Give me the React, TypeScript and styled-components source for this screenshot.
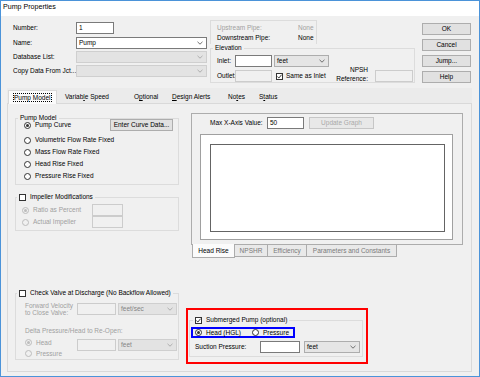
import styled, { createGlobalStyle } from 'styled-components';

const GlobalStyle = createGlobalStyle`
  html, body { margin: 0; padding: 0; background: #ffffff; }
  body {
    font-family: 'Liberation Sans', Arial, sans-serif;
    font-size: 6.5px;
    line-height: 8px;
    color: #000000;
  }
  *, *::before, *::after { box-sizing: border-box; }
`;

const GREY = '#a0a0a0';

const Window = styled.div`
  width: 480px;
  height: 377px;
  border: 1px solid #4b93d9;
  background: #f0f0f0;
  display: flex;
  flex-direction: column;
  overflow: hidden;
`;

const TitleBar = styled.div`
  height: 15px;
  flex-shrink: 0;
  background: #ffffff;
  padding: 2px 0 0 2px;
  font-size: 7.1px;
  line-height: 9px;
`;

const TopArea = styled.div`
  height: 72px;
  flex-shrink: 0;
  display: flex;
  padding: 4px 0 0 12px;
`;

const FieldList = styled.div`
  width: 194px;
  display: flex;
  flex-direction: column;
  gap: 2px;
  padding-top: 2px;
`;

const FieldRow = styled.div`
  display: flex;
  align-items: center;
  height: 12px;
  &:first-child {
    margin-bottom: 1px;
  }
`;

const FieldLabel = styled.span`
  width: 63px;
  flex-shrink: 0;
  white-space: nowrap;
`;

const Text = styled.span<{ $off?: boolean; $ml?: number }>`
  color: ${(p) => (p.$off ? GREY : '#000')};
  margin-left: ${(p) => p.$ml ?? 0}px;
  white-space: nowrap;
`;

const TextBox = styled.div<{ $w: number; $off?: boolean; $ml?: number; $end?: boolean }>`
  width: ${(p) => p.$w}px;
  height: 12px;
  flex-shrink: 0;
  margin-left: ${(p) => p.$ml ?? 0}px;
  align-self: ${(p) => (p.$end ? 'flex-end' : 'auto')};
  border: 1px solid ${(p) => (p.$off ? '#cccccc' : '#7a7a7a')};
  background: ${(p) => (p.$off ? '#f0f0f0' : '#ffffff')};
  padding-left: 2px;
  display: flex;
  align-items: center;
`;

type ComboKind = 'edit' | 'list' | 'off';

const ComboBox = styled.div<{ $w: number; $kind: ComboKind; $ml?: number }>`
  width: ${(p) => p.$w}px;
  height: 12px;
  flex-shrink: 0;
  margin-left: ${(p) => p.$ml ?? 0}px;
  display: flex;
  align-items: center;
  justify-content: space-between;
  padding: 0 3px 0 2px;
  border: 1px solid ${(p) => (p.$kind === 'edit' ? '#7a7a7a' : p.$kind === 'list' ? '#adadad' : '#cfcfcf')};
  background: ${(p) => (p.$kind === 'edit' ? '#ffffff' : p.$kind === 'list' ? '#e5e5e5' : '#e3e3e3')};
  color: ${(p) => (p.$kind === 'off' ? '#838383' : '#000')};
`;

const Chevron = ({ color }: { color: string }) => (
  <svg width="6" height="4" viewBox="0 0 6 4">
    <polyline points="0.5,0.8 3,3.2 5.5,0.8" fill="none" stroke={color} strokeWidth="0.9" />
  </svg>
);

const Combo = ({ w, kind, value, ml }: { w: number; kind: ComboKind; value?: string; ml?: number }) => (
  <ComboBox $w={w} $kind={kind} $ml={ml}>
    <span>{value}</span>
    <Chevron color={kind === 'off' ? '#a8a8a8' : '#606060'} />
  </ComboBox>
);

const Button = styled.div<{ $w: number; $off?: boolean; $ml?: number; $auto?: boolean }>`
  width: ${(p) => p.$w}px;
  height: 12px;
  flex-shrink: 0;
  margin-left: ${(p) => (p.$auto ? 'auto' : `${p.$ml ?? 0}px`)};
  border: 1px solid ${(p) => (p.$off ? '#c6c6c6' : '#adadad')};
  background: ${(p) => (p.$off ? '#e8e8e8' : '#e1e1e1')};
  color: ${(p) => (p.$off ? '#a8a8a8' : '#000')};
  display: flex;
  align-items: center;
  justify-content: center;
  white-space: nowrap;
`;

const CheckBoxBox = styled.span<{ $ml?: number }>`
  width: 7px;
  height: 7px;
  flex-shrink: 0;
  margin-left: ${(p) => p.$ml ?? 0}px;
  border: 1px solid #333333;
  background: #ffffff;
  display: flex;
  align-items: center;
  justify-content: center;
`;

const CheckBox = ({ checked, ml }: { checked?: boolean; ml?: number }) => (
  <CheckBoxBox $ml={ml}>
    {checked && (
      <svg width="5" height="5" viewBox="0 0 5 5">
        <polyline points="0.4,2.6 1.9,4 4.6,0.7" fill="none" stroke="#222" strokeWidth="0.9" />
      </svg>
    )}
  </CheckBoxBox>
);

const RadioRing = styled.span<{ $off?: boolean }>`
  width: 7px;
  height: 7px;
  flex-shrink: 0;
  border-radius: 50%;
  border: 1px solid ${(p) => (p.$off ? '#bcbcbc' : '#333333')};
  background: ${(p) => (p.$off ? '#f0f0f0' : '#ffffff')};
  display: flex;
  align-items: center;
  justify-content: center;
`;

const RadioDot = styled.span<{ $off?: boolean }>`
  width: 3px;
  height: 3px;
  border-radius: 50%;
  background: ${(p) => (p.$off ? '#bcbcbc' : '#333333')};
`;

const Radio = ({ checked, off }: { checked?: boolean; off?: boolean }) => (
  <RadioRing $off={off}>{checked && <RadioDot $off={off} />}</RadioRing>
);

const Middle = styled.div`
  width: 205px;
  margin-left: 3px;
  display: flex;
  flex-direction: column;
`;

const PipeBox = styled.div`
  width: 107px;
  height: 24px;
  border: 1px solid #dcdcdc;
  border-bottom: none;
  padding: 2px 0 0 6px;
`;

const PipeRow = styled.div<{ $off?: boolean }>`
  height: 10px;
  display: flex;
  align-items: center;
  color: ${(p) => (p.$off ? GREY : '#000')};
`;

const PipeLabel = styled.span`
  width: 81px;
`;

const Group = styled.fieldset<{ $w: number; $mt?: number; $ml?: number }>`
  width: ${(p) => p.$w}px;
  margin: ${(p) => p.$mt ?? 0}px 0 0 ${(p) => p.$ml ?? 0}px;
  padding: 0;
  border: 1px solid #dcdcdc;
  min-width: 0;
`;

const Legend = styled.legend<{ $ml: number }>`
  margin-left: ${(p) => p.$ml}px;
  padding: 0 2px;
  height: 8px;
  line-height: 8px;
  display: flex;
  align-items: center;
  gap: 4px;
  white-space: nowrap;
`;

const GroupBody = styled.div<{ $pad: string }>`
  padding: ${(p) => p.$pad};
  display: flex;
  flex-direction: column;
`;

const ElevBody = styled.div`
  display: flex;
  padding: 3px 0 0 6px;
`;

const ElevRows = styled.div`
  display: flex;
  flex-direction: column;
  gap: 3px;
`;

const Row = styled.div<{ $h?: number; $mt?: number }>`
  display: flex;
  align-items: center;
  height: ${(p) => p.$h ?? 12}px;
  margin-top: ${(p) => p.$mt ?? 0}px;
  white-space: nowrap;
`;

const ElevLabel = styled.span`
  width: 18px;
  flex-shrink: 0;
`;

const NpshLabel = styled.div`
  align-self: flex-end;
  width: 38px;
  margin: 0 0 -1px 1px;
  text-align: right;
  line-height: 9px;
`;

const ButtonCol = styled.div`
  margin-left: 7px;
  padding-top: 3px;
  display: flex;
  flex-direction: column;
  gap: 4px;
`;

const TabArea = styled.div`
  padding-left: 6px;
  display: flex;
  flex-direction: column;
`;

const TabStrip = styled.div`
  width: 465px;
  height: 15px;
  display: flex;
  align-items: flex-end;
  background: #ebebeb;
`;

const Tab = styled.div<{ $w: number; $pl: number; $active?: boolean }>`
  width: ${(p) => p.$w}px;
  padding-left: ${(p) => p.$pl}px;
  height: ${(p) => (p.$active ? 14 : 12)}px;
  margin: 0 0 ${(p) => (p.$active ? -1 : 0)}px ${(p) => (p.$active ? 1 : 0)}px;
  display: flex;
  align-items: center;
  white-space: nowrap;
  position: relative;
  z-index: ${(p) => (p.$active ? 1 : 0)};
  background: ${(p) => (p.$active ? '#fbfbfb' : 'transparent')};
  border: ${(p) => (p.$active ? '1px solid #d9d9d9' : 'none')};
  border-bottom: none;
`;

const FocusRect = styled.span`
  display: inline-block;
  border: 1px dotted #000;
  line-height: 7px;
  padding: 0;
`;

const Panel = styled.div`
  width: 465px;
  height: 269px;
  border: 1px solid #d9d9d9;
  background: #f0f0f0;
  display: flex;
  padding: 9px 0 0 7px;
`;

const LeftCol = styled.div`
  width: 164px;
  flex-shrink: 0;
  display: flex;
  flex-direction: column;
  padding-top: 1px;
`;

const RadioItem = styled.div<{ $w?: number }>`
  display: flex;
  align-items: center;
  gap: 4px;
  width: ${(p) => (p.$w ? `${p.$w}px` : 'auto')};
  flex-shrink: 0;
`;

const TwoLine = styled.div`
  width: 52px;
  flex-shrink: 0;
  line-height: 7px;
  color: ${GREY};
`;

const RadioCol = styled.div`
  width: 52px;
  display: flex;
  flex-direction: column;
  color: ${GREY};
`;

const ControlPair = styled.div<{ $mt?: number }>`
  display: flex;
  align-self: flex-start;
  margin-top: ${(p) => p.$mt ?? 0}px;
`;

const RightCol = styled.div`
  margin-left: 7px;
  display: flex;
  flex-direction: column;
`;

const GraphFrame = styled.div`
  width: 272px;
  height: 132px;
  margin-left: 5px;
  border: 1px solid #acacac;
  padding: 3px 0 0 18px;
  display: flex;
  flex-direction: column;
`;

const AxisLabel = styled.span`
  width: 52px;
  text-align: right;
  white-space: nowrap;
`;

const GraphOuter = styled.div`
  width: 253px;
  height: 106px;
  margin: 5px 0 0 -10px;
  border: 1px solid #a0a0a0;
  background: #ffffff;
  padding: 9px 0 0 9px;
`;

const GraphInner = styled.div`
  width: 235px;
  height: 88px;
  border: 1px solid #646464;
`;

const BottomTabs = styled.div`
  display: flex;
  align-items: flex-start;
  margin-left: 6px;
  height: 14px;
`;

const BottomTab = styled.div<{ $w: number; $active?: boolean }>`
  width: ${(p) => p.$w}px;
  height: ${(p) => (p.$active ? 14 : 12)}px;
  margin-top: ${(p) => (p.$active ? -1 : 0)}px;
  margin-left: -1px;
  &:first-child {
    margin-left: 0;
  }
  border: 1px solid #acacac;
  border-top: none;
  background: ${(p) => (p.$active ? '#fbfbfb' : '#e9e9e9')};
  color: ${(p) => (p.$active ? '#000' : '#7a7a7a')};
  display: flex;
  align-items: center;
  justify-content: center;
  white-space: nowrap;
  position: relative;
  z-index: ${(p) => (p.$active ? 1 : 0)};
`;

const RedBox = styled.div`
  width: 182px;
  height: 56px;
  margin-top: 49px;
  border: 2px solid #ff0000;
`;

const BlueBox = styled.div`
  width: 104px;
  height: 11px;
  margin-left: 1px;
  border: 2px solid #0000ff;
  padding-left: 2px;
  display: flex;
  align-items: center;
  line-height: 7px;
`;

const SuctionLabel = styled.span`
  width: 65px;
  margin-left: 5px;
  flex-shrink: 0;
`;

const topTabs = [
  { key: 'pm', w: 49, pl: 4, active: true },
  { key: 'vs', w: 67, pl: 8 },
  { key: 'op', w: 44, pl: 10 },
  { key: 'da', w: 56, pl: 4 },
  { key: 'no', w: 31, pl: 4 },
  { key: 'st', w: 30, pl: 4 },
];

const tabLabels: Record<string, React.ReactNode> = {
  pm: <FocusRect>Pump Model</FocusRect>,
  vs: (
    <span>
      Variab<u>l</u>e Speed
    </span>
  ),
  op: (
    <span>
      O<u>p</u>tional
    </span>
  ),
  da: (
    <span>
      <u>D</u>esign Alerts
    </span>
  ),
  no: (
    <span>
      No<u>t</u>es
    </span>
  ),
  st: (
    <span>
      S<u>t</u>atus
    </span>
  ),
};

const graphTabs = [
  { label: 'Head Rise', w: 43, active: true },
  { label: 'NPSHR', w: 34 },
  { label: 'Efficiency', w: 40 },
  { label: 'Parameters and Constants', w: 91 },
];

export default function App() {
  return (
    <>
      <GlobalStyle />
      <Window>
        <TitleBar>Pump Properties</TitleBar>
        <TopArea>
          <FieldList>
            <FieldRow>
              <FieldLabel>Number:</FieldLabel>
              <TextBox $w={38}>1</TextBox>
            </FieldRow>
            <FieldRow>
              <FieldLabel>Name:</FieldLabel>
              <Combo w={131} kind="edit" value="Pump" />
            </FieldRow>
            <FieldRow>
              <FieldLabel>Database List:</FieldLabel>
              <Combo w={131} kind="off" />
            </FieldRow>
            <FieldRow>
              <FieldLabel>Copy Data From Jct...</FieldLabel>
              <Combo w={131} kind="off" />
            </FieldRow>
          </FieldList>

          <Middle>
            <PipeBox>
              <PipeRow $off>
                <PipeLabel>Upstream Pipe:</PipeLabel>None
              </PipeRow>
              <PipeRow>
                <PipeLabel>Downstream Pipe:</PipeLabel>None
              </PipeRow>
            </PipeBox>
            <Group $w={205}>
              <Legend $ml={2}>Elevation</Legend>
              <ElevBody>
                <ElevRows>
                  <Row>
                    <ElevLabel>Inlet:</ElevLabel>
                    <TextBox $w={37} />
                    <Combo w={55} kind="list" value="feet" ml={2} />
                  </Row>
                  <Row>
                    <ElevLabel>Outlet:</ElevLabel>
                    <TextBox $w={37} $off />
                    <CheckBox checked ml={4} />
                    <Text $ml={3}>Same as Inlet</Text>
                  </Row>
                </ElevRows>
                <NpshLabel>
                  NPSH
                  <br />
                  Reference:
                </NpshLabel>
                <TextBox $w={38} $off $ml={7} $end />
              </ElevBody>
            </Group>
          </Middle>

          <ButtonCol>
            <Button $w={49}>OK</Button>
            <Button $w={49}>Cancel</Button>
            <Button $w={49}>Jump...</Button>
            <Button $w={49}>Help</Button>
          </ButtonCol>
        </TopArea>

        <TabArea>
          <TabStrip>
            {topTabs.map((t) => (
              <Tab key={t.key} $w={t.w} $pl={t.pl} $active={t.active}>
                {tabLabels[t.key]}
              </Tab>
            ))}
          </TabStrip>

          <Panel>
            <LeftCol>
              <Group $w={164}>
                <Legend $ml={2}>Pump Model</Legend>
                <GroupBody $pad="0 5px 2px 8px">
                  <Row $mt={-3}>
                    <RadioItem>
                      <Radio checked />
                      <span>Pump Curve</span>
                    </RadioItem>
                    <Button $w={63} $auto>
                      Enter Curve Data...
                    </Button>
                  </Row>
                  <Row $mt={3}>
                    <RadioItem>
                      <Radio />
                      <span>Volumetric Flow Rate Fixed</span>
                    </RadioItem>
                  </Row>
                  <Row>
                    <RadioItem>
                      <Radio />
                      <span>Mass Flow Rate Fixed</span>
                    </RadioItem>
                  </Row>
                  <Row>
                    <RadioItem>
                      <Radio />
                      <span>Head Rise Fixed</span>
                    </RadioItem>
                  </Row>
                  <Row>
                    <RadioItem>
                      <Radio />
                      <span>Pressure Rise Fixed</span>
                    </RadioItem>
                  </Row>
                </GroupBody>
              </Group>

              <Group $w={164} $mt={8}>
                <Legend $ml={1}>
                  <CheckBox />
                  <span>Impeller Modifications</span>
                </Legend>
                <GroupBody $pad="3px 0 2px 6px">
                  <Row>
                    <RadioItem $w={70}>
                      <Radio checked off />
                      <Text $off>Ratio as Percent</Text>
                    </RadioItem>
                    <TextBox $w={31} $off />
                  </Row>
                  <Row>
                    <RadioItem $w={70}>
                      <Radio off />
                      <Text $off>Actual Impeller</Text>
                    </RadioItem>
                    <TextBox $w={31} $off />
                  </Row>
                </GroupBody>
              </Group>

              <Group $w={164} $mt={58}>
                <Legend $ml={1}>
                  <CheckBox />
                  <span>Check Valve at Discharge (No Backflow Allowed)</span>
                </Legend>
                <GroupBody $pad="6px 0 0 9px">
                  <Row>
                    <TwoLine>
                      Forward Velocity
                      <br />
                      to Close Valve:
                    </TwoLine>
                    <TextBox $w={39} $off />
                    <Combo w={59} kind="off" value="feet/sec" ml={2} />
                  </Row>
                  <Row $h={8} $mt={12}>
                    <Text $off>Delta Pressure/Head to Re-Open:</Text>
                  </Row>
                  <Row $h={22} $mt={2}>
                    <RadioCol>
                      <Row $h={11}>
                        <RadioItem>
                          <Radio checked off />
                          <span>Head</span>
                        </RadioItem>
                      </Row>
                      <Row $h={11}>
                        <RadioItem>
                          <Radio off />
                          <span>Pressure</span>
                        </RadioItem>
                      </Row>
                    </RadioCol>
                    <ControlPair $mt={2}>
                      <TextBox $w={39} $off />
                      <Combo w={59} kind="off" value="feet" ml={2} />
                    </ControlPair>
                  </Row>
                </GroupBody>
              </Group>
            </LeftCol>

            <RightCol>
              <GraphFrame>
                <Row>
                  <AxisLabel>Max X-Axis Value:</AxisLabel>
                  <TextBox $w={37} $ml={5}>
                    50
                  </TextBox>
                  <Button $w={65} $ml={5} $off>
                    Update Graph
                  </Button>
                </Row>
                <GraphOuter>
                  <GraphInner />
                </GraphOuter>
              </GraphFrame>
              <BottomTabs>
                {graphTabs.map((t) => (
                  <BottomTab key={t.label} $w={t.w} $active={t.active}>
                    {t.label}
                  </BottomTab>
                ))}
              </BottomTabs>

              <RedBox>
                <Group $w={174} $mt={6} $ml={1}>
                  <Legend $ml={3}>
                    <CheckBox checked />
                    <span>Submerged Pump (optional)</span>
                  </Legend>
                  <GroupBody $pad="3px 0 3px 0">
                    <BlueBox>
                      <RadioItem $w={57}>
                        <Radio checked />
                        <span>Head (HGL)</span>
                      </RadioItem>
                      <RadioItem>
                        <Radio />
                        <span>Pressure</span>
                      </RadioItem>
                    </BlueBox>
                    <Row $mt={3}>
                      <SuctionLabel>Suction Pressure:</SuctionLabel>
                      <TextBox $w={40} />
                      <Combo w={56} kind="list" value="feet" ml={4} />
                    </Row>
                  </GroupBody>
                </Group>
              </RedBox>
            </RightCol>
          </Panel>
        </TabArea>
      </Window>
    </>
  );
}
